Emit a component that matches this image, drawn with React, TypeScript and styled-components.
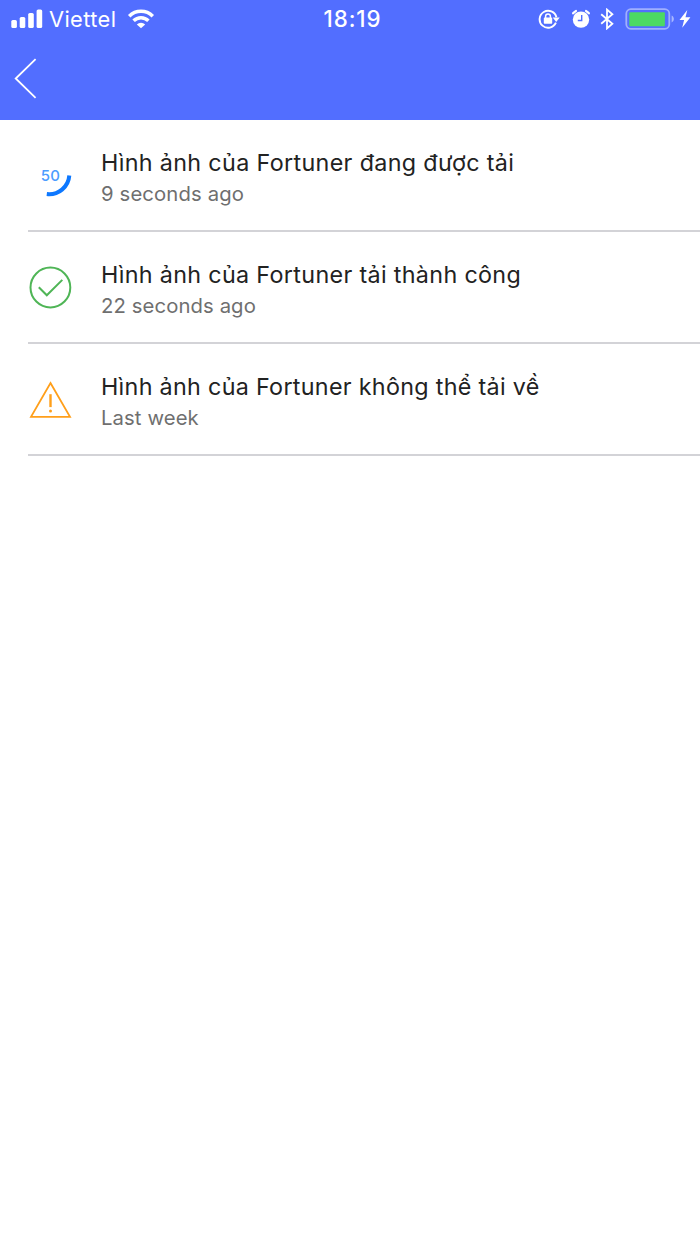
import React from 'react';
import styled, { createGlobalStyle } from 'styled-components';

const GlobalStyle = createGlobalStyle`
  * { box-sizing: border-box; }
  body { margin: 0; background: #fff; font-family: Inter, "Liberation Sans", sans-serif; }
`;

const Screen = styled.main`
  min-height: 1244px;
  background: #fff;
`;

const Header = styled.header`
  height: 120px;
  background: #526eff;
  color: #fff;
`;

const StatusBar = styled.div`
  display: grid;
  grid-template-columns: 1fr auto 1fr;
  align-items: center;
  height: 38px;
  padding: 0 9px 0 11px;
`;

const StatusLeft = styled.div`
  display: flex;
  align-items: center;
`;

const StatusRight = styled.div`
  display: flex;
  align-items: center;
  justify-content: flex-end;
`;

const Carrier = styled.span`
  width: 68px;
  margin: 0 10px 0 6px;
  font-size: 21.8px;
  line-height: 38px;
  letter-spacing: 0.4px;
  white-space: nowrap;
`;

const Clock = styled.time`
  padding-left: 3px;
  font-size: 22.3px;
  font-weight: 550;
  line-height: 38px;
  letter-spacing: 0.9px;
`;

const Icon = styled.svg<{ $gap?: number }>`
  display: block;
  flex: none;
  margin-left: ${(p) => p.$gap ?? 0}px;
`;

const NavBar = styled.nav`
  display: flex;
  align-items: center;
  height: 82px;
  padding-left: 13px;
`;

const BackButton = styled.button`
  padding: 0;
  border: 0;
  background: none;
  color: inherit;
`;

const List = styled.ul`
  margin: 0;
  padding: 0 0 0 28px;
  list-style: none;
`;

const Row = styled.li`
  display: flex;
  height: 112px;
  border-bottom: 2px solid #d3d3d7;
`;

const RowIcon = styled.div`
  width: 44px;
  padding-top: 33px;
`;

const RowText = styled.div`
  padding: 27px 0 0 29px;
  white-space: nowrap;
`;

const Title = styled.div<{ $spacing: number }>`
  color: #222;
  font-size: 23.3px;
  line-height: 32px;
  letter-spacing: ${(p) => p.$spacing}px;
`;

const Time = styled.div<{ $spacing: number }>`
  color: #6f6f6f;
  font-size: 20.3px;
  line-height: 30px;
  letter-spacing: ${(p) => p.$spacing}px;
`;

const ProgressLabel = styled.text`
  font-size: 15px;
  font-weight: 500;
  letter-spacing: 0.3px;
`;

const SignalIcon = () => (
  <Icon width="32" height="20" viewBox="0 0 32 20" fill="#fff">
    <rect x="0.3" y="11" width="5.6" height="8" rx="1.6" />
    <rect x="8.7" y="8" width="5.6" height="11" rx="1.6" />
    <rect x="17.2" y="4" width="5.6" height="15" rx="1.6" />
    <rect x="25.6" y="0.4" width="5.6" height="18.6" rx="1.6" />
  </Icon>
);

const WifiIcon = () => (
  <Icon width="28" height="20" viewBox="0 0 28 20">
    <path d="M2.2 7.2a16.8 16.8 0 0 1 23.6 0M6.6 11.7a10.5 10.5 0 0 1 14.8 0" fill="none" stroke="#fff" strokeWidth="3.5" />
    <path d="M9.8 15.4a6.2 6.2 0 0 1 8.4 0L14 19.2z" fill="#fff" />
  </Icon>
);

const LockIcon = () => (
  <Icon width="22" height="20" viewBox="0 0 22 20">
    <path d="M17.9 13.7A8.5 8.5 0 1 1 18.4 8.3" fill="none" stroke="#fff" strokeWidth="1.9" />
    <path d="M14.7 8.6h7l-3.5 4.5z" fill="#fff" />
    <rect x="5.8" y="8.6" width="8.4" height="6.2" rx="0.8" fill="#fff" />
    <path d="M7.6 9V7.3a2.4 2.4 0 0 1 4.8 0V9" fill="none" stroke="#fff" strokeWidth="1.5" />
  </Icon>
);

const AlarmIcon = () => (
  <Icon $gap={11} width="20" height="20" viewBox="0 0 20 20">
    <circle cx="10" cy="10.6" r="8.2" fill="#fff" />
    <path d="M2.1 4.3a9 9 0 0 1 2.9-2.4M17.9 4.3a9 9 0 0 0-2.9-2.4" fill="none" stroke="#fff" strokeWidth="2.2" strokeLinecap="round" />
    <path d="M10.7 6v5.5H6.8" fill="none" stroke="#526eff" strokeWidth="1.4" />
  </Icon>
);

const BluetoothIcon = () => (
  <Icon $gap={9} width="14" height="22" viewBox="0 0 14 22">
    <path d="M1.2 6.2l11.2 9.5L7 20.4V1.6l5.4 4.7L1.2 15.8" fill="none" stroke="#fff" strokeWidth="1.8" />
  </Icon>
);

const BatteryIcon = () => (
  <Icon $gap={11} width="49" height="22" viewBox="0 0 49 22">
    <rect x="1.3" y="1.2" width="43" height="19.6" rx="4.5" fill="none" stroke="#fff" strokeOpacity="0.45" strokeWidth="1.8" />
    <path d="M46.6 7.6c3 1.3 3 5.5 0 6.8z" fill="#fff" fillOpacity="0.5" />
    <rect x="4.3" y="4.2" width="35.6" height="14" rx="1" fill="#4cd964" />
  </Icon>
);

const BoltIcon = () => (
  <Icon $gap={5} width="12" height="18" viewBox="0 0 12 18">
    <path d="M8.3 0L0.5 10h4.6L3.2 17.8 11.4 7.3H6.5z" fill="#fff" />
  </Icon>
);

const BackIcon = () => (
  <Icon width="24" height="42" viewBox="0 0 24 42">
    <path d="M22.6 1.2L2.7 20.5l19.9 19.3" fill="none" stroke="#fff" strokeWidth="1.8" />
  </Icon>
);

const ProgressIcon = () => (
  <Icon width="44" height="44" viewBox="0 0 44 44">
    <path d="M41.3 22.5A20.2 20.2 0 0 1 18.8 41.1" fill="none" stroke="#0d78ff" strokeWidth="4" />
    <ProgressLabel x="12.7" y="27.8" fill="#4b9cff">50</ProgressLabel>
  </Icon>
);

const SuccessIcon = () => (
  <Icon width="44" height="44" viewBox="0 0 44 44" fill="none" stroke="#4fb556" strokeWidth="2">
    <circle cx="22.4" cy="22.5" r="19.9" />
    <path d="M10.8 22.3l8 8L34.3 14.9" />
  </Icon>
);

const WarningIcon = () => (
  <Icon width="44" height="44" viewBox="0 0 44 44">
    <path d="M22.5 6L42 39.8H3z" fill="none" stroke="#ff9f1a" strokeWidth="1.8" />
    <path d="M22.5 17.2v12.9" stroke="#ff9f1a" strokeWidth="2.4" />
    <circle cx="22.5" cy="33.9" r="1.5" fill="#ff9f1a" />
  </Icon>
);

const items = [
  { icon: <ProgressIcon />, title: 'Hình ảnh của Fortuner đang được tải', time: '9 seconds ago', ts: 0.35, ss: 0.13 },
  { icon: <SuccessIcon />, title: 'Hình ảnh của Fortuner tải thành công', time: '22 seconds ago', ts: 0.34, ss: 0.1 },
  { icon: <WarningIcon />, title: 'Hình ảnh của Fortuner không thể tải về', time: 'Last week', ts: 0.31, ss: 0.1 },
];

export default function App() {
  return (
    <Screen>
      <GlobalStyle />
      <Header>
        <StatusBar>
          <StatusLeft>
            <SignalIcon />
            <Carrier>Viettel</Carrier>
            <WifiIcon />
          </StatusLeft>
          <Clock>18:19</Clock>
          <StatusRight>
            <LockIcon />
            <AlarmIcon />
            <BluetoothIcon />
            <BatteryIcon />
            <BoltIcon />
          </StatusRight>
        </StatusBar>
        <NavBar>
          <BackButton aria-label="Back">
            <BackIcon />
          </BackButton>
        </NavBar>
      </Header>
      <List>
        {items.map((item) => (
          <Row key={item.title}>
            <RowIcon>{item.icon}</RowIcon>
            <RowText>
              <Title $spacing={item.ts}>{item.title}</Title>
              <Time $spacing={item.ss}>{item.time}</Time>
            </RowText>
          </Row>
        ))}
      </List>
    </Screen>
  );
}
